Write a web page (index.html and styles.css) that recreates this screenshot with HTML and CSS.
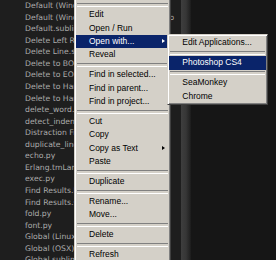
FILE: index.html
```html
<!DOCTYPE html>
<html lang="en">
<head>
    <meta charset="UTF-8">
    <title>Sidebar context menu</title>
    <link rel="stylesheet" href="styles.css">
</head>
<body>
    <div class="janela">
        <aside class="sidebar">
            <ul class="arquivos">
                <li>Default (Windows).sublime-keymap</li>
                <li>Default (Windows).sublime-mousemap</li>
                <li>Default.sublime-commands</li>
                <li>Delete Left Right.sublime-macro</li>
                <li>Delete Line.sublime-macro</li>
                <li>Delete to BOL.sublime-macro</li>
                <li>Delete to EOL.sublime-macro</li>
                <li>Delete to Hard BOL.sublime-macro</li>
                <li>Delete to Hard EOL.sublime-macro</li>
                <li>delete_word.py</li>
                <li>detect_indentation.py</li>
                <li>Distraction Free.sublime-settings</li>
                <li>duplicate_line.py</li>
                <li>echo.py</li>
                <li>Erlang.tmLanguage</li>
                <li>exec.py</li>
                <li>Find Results.hidden-tmLanguage</li>
                <li>Find Results.sublime-settings</li>
                <li>fold.py</li>
                <li>font.py</li>
                <li>Global (Linux).sublime-settings</li>
                <li>Global (OSX).sublime-settings</li>
                <li>Global.sublime-settings</li>
            </ul>
        </aside>
        <div class="divisor"></div>
        <main class="editor"></main>
    </div>

    <div class="menu menu-principal">
        <div class="item">New Folder...</div>
        <div class="separador"></div>
        <div class="item">Edit</div>
        <div class="item">Open / Run</div>
        <div class="item ativo seta">Open with...</div>
        <div class="item">Reveal</div>
        <div class="separador"></div>
        <div class="item">Find in selected...</div>
        <div class="item">Find in parent...</div>
        <div class="item">Find in project...</div>
        <div class="separador"></div>
        <div class="item">Cut</div>
        <div class="item">Copy</div>
        <div class="item seta">Copy as Text</div>
        <div class="item">Paste</div>
        <div class="separador"></div>
        <div class="item">Duplicate</div>
        <div class="separador"></div>
        <div class="item">Rename...</div>
        <div class="item">Move...</div>
        <div class="separador"></div>
        <div class="item">Delete</div>
        <div class="separador"></div>
        <div class="item">Refresh</div>
    </div>

    <div class="menu submenu">
        <div class="item">Edit Applications...</div>
        <div class="separador"></div>
        <div class="item ativo">Photoshop CS4</div>
        <div class="separador"></div>
        <div class="item">SeaMonkey</div>
        <div class="item">Chrome</div>
    </div>
</body>
</html>
```

FILE: styles.css
```css
* {
    box-sizing: border-box;
    margin: 0;
    padding: 0;
}

body {
    background-color: #161616;
    overflow: hidden;
    height: 260px;
}

.janela {
    display: flex;
    height: 260px;
}

.sidebar {
    width: 181px;
    flex-shrink: 0;
    background-color: #1e1e1e;
    overflow: hidden;
}

.arquivos {
    list-style: none;
    padding-left: 25px;
    font-family: "DejaVu Sans", sans-serif;
    font-size: 7.7px;
    line-height: 11.57px;
    color: #ababab;
    white-space: nowrap;
}

.divisor {
    width: 10px;
    flex-shrink: 0;
    background-image: linear-gradient(90deg, #3e3e3e 0%, #363636 50%, #272727 80%, #1c1c1c 100%);
}

.editor {
    flex: 1;
    background-color: #161616;
}

/* Menus estilo Windows clássico */
.menu {
    position: absolute;
    background-color: #d4d0c8;
    border: 1px solid;
    border-color: #d4d0c8 #404040 #404040 #d4d0c8;
    box-shadow: inset 1px 1px 0 #ffffff, inset -1px -1px 0 #808080;
    padding: 1px;
    font-family: "Liberation Sans", Arial, sans-serif;
    font-size: 8.5px;
    color: #000;
}

.menu-principal {
    left: 74px;
    top: -13.7px;
    width: 97px;
}

.submenu {
    left: 167.3px;
    top: 34.4px;
    width: 101px;
}

.item {
    position: relative;
    height: 13.3px;
    line-height: 13.3px;
    padding-left: 13px;
    white-space: nowrap;
}

.item.ativo {
    background-color: #0a246a;
    color: #fff;
}

.seta::after {
    content: "";
    position: absolute;
    right: 4px;
    top: 4.2px;
    border-left: 3px solid #000;
    border-top: 2.5px solid transparent;
    border-bottom: 2.5px solid transparent;
}

.ativo.seta::after {
    border-left-color: #fff;
}

.separador {
    height: 6.75px;
    display: flex;
    align-items: center;
    padding: 0 1px;
}

.separador::before {
    content: "";
    flex: 1;
    height: 2px;
    border-top: 1px solid #808080;
    border-bottom: 1px solid #ffffff;
}
```
